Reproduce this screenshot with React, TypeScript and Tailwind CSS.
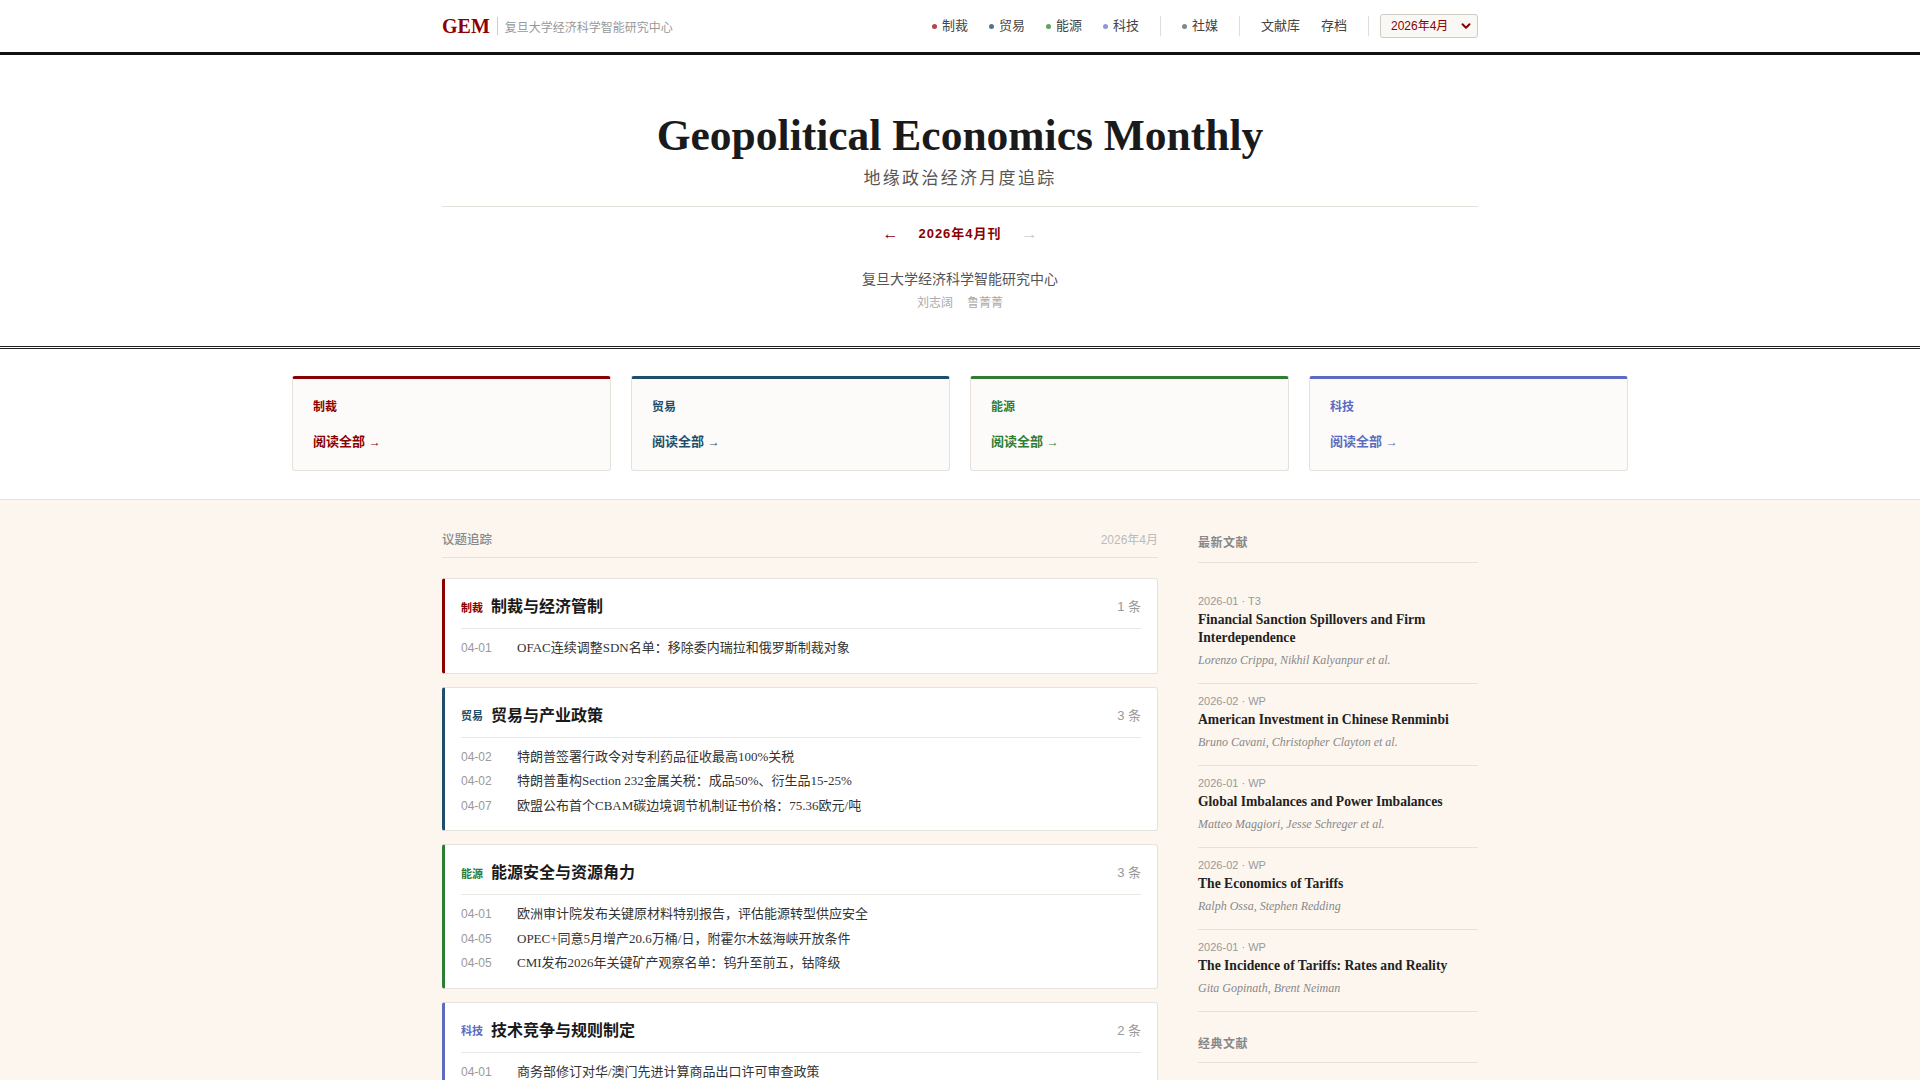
const sans = "font-['Liberation_Sans','Noto_Sans_CJK_SC',sans-serif]";
const serif = "font-['Liberation_Serif','Noto_Sans_CJK_SC',serif]";

const navTopics = [
  { label: '制裁', dot: 'bg-[#b0474a]' },
  { label: '贸易', dot: 'bg-[#557489]' },
  { label: '能源', dot: 'bg-[#5fa35f]' },
  { label: '科技', dot: 'bg-[#9097d8]' },
];

const pillars = [
  { label: '制裁', top: 'border-t-[#8b0000]', text: 'text-[#8b0000]' },
  { label: '贸易', top: 'border-t-[#1f4e6b]', text: 'text-[#1f4e6b]' },
  { label: '能源', top: 'border-t-[#2e7d32]', text: 'text-[#2e7d32]' },
  { label: '科技', top: 'border-t-[#5c6bc0]', text: 'text-[#5c6bc0]' },
];

const topics = [
  {
    tag: '制裁',
    title: '制裁与经济管制',
    border: 'border-l-[#8b0000]',
    tagColor: 'text-[#8b0000]',
    items: [['04-01', 'OFAC连续调整SDN名单：移除委内瑞拉和俄罗斯制裁对象']],
  },
  {
    tag: '贸易',
    title: '贸易与产业政策',
    border: 'border-l-[#1f4e6b]',
    tagColor: 'text-[#1f4e6b]',
    items: [
      ['04-02', '特朗普签署行政令对专利药品征收最高100%关税'],
      ['04-02', '特朗普重构Section 232金属关税：成品50%、衍生品15-25%'],
      ['04-07', '欧盟公布首个CBAM碳边境调节机制证书价格：75.36欧元/吨'],
    ],
  },
  {
    tag: '能源',
    title: '能源安全与资源角力',
    border: 'border-l-[#2e7d32]',
    tagColor: 'text-[#2e7d32]',
    items: [
      ['04-01', '欧洲审计院发布关键原材料特别报告，评估能源转型供应安全'],
      ['04-05', 'OPEC+同意5月增产20.6万桶/日，附霍尔木兹海峡开放条件'],
      ['04-05', 'CMI发布2026年关键矿产观察名单：钨升至前五，钴降级'],
    ],
  },
  {
    tag: '科技',
    title: '技术竞争与规则制定',
    border: 'border-l-[#5c6bc0]',
    tagColor: 'text-[#5c6bc0]',
    items: [
      ['04-01', '商务部修订对华/澳门先进计算商品出口许可审查政策'],
      ['04-06', '荷兰扩大先进半导体设备出口管制范围'],
    ],
  },
];

const papers = [
  { meta: '2026-01 · T3', title: 'Financial Sanction Spillovers and Firm Interdependence', authors: 'Lorenzo Crippa, Nikhil Kalyanpur et al.' },
  { meta: '2026-02 · WP', title: 'American Investment in Chinese Renminbi', authors: 'Bruno Cavani, Christopher Clayton et al.' },
  { meta: '2026-01 · WP', title: 'Global Imbalances and Power Imbalances', authors: 'Matteo Maggiori, Jesse Schreger et al.' },
  { meta: '2026-02 · WP', title: 'The Economics of Tariffs', authors: 'Ralph Ossa, Stephen Redding' },
  { meta: '2026-01 · WP', title: 'The Incidence of Tariffs: Rates and Reality', authors: 'Gita Gopinath, Brent Neiman' },
];

const classics = [
  { meta: '2019 · IS', title: 'Weaponized Interdependence', authors: 'Henry Farrell, Abraham L. Newman' },
  { meta: '1945 · Book', title: 'National Power and the Structure of Foreign Trade', authors: 'Albert O. Hirschman' },
];

function PaperList({ list }: { list: typeof papers }) {
  return (
    <div className="mt-[21px]">
      {list.map((p, i) => (
        <div key={i} className="border-b border-[#e6e1da] pt-[9px] pb-[14px]">
          <div className={`${sans} text-[11px] leading-[16px] text-[#999]`}>{p.meta}</div>
          <div className={`${serif} mt-[2px] text-[13.6px] font-bold leading-[18px] text-[#222]`}>{p.title}</div>
          <div className={`${serif} mt-[4px] text-[12px] italic leading-[18px] text-[#888]`}>{p.authors}</div>
        </div>
      ))}
    </div>
  );
}

export default function App() {
  return (
    <div className={`${sans} min-h-screen bg-[#fdf6ef] text-[#333]`}>
      {/* Top bar */}
      <header className="border-b-[3px] border-[#111] bg-white">
        <div className="mx-auto flex h-[52px] max-w-[1100px] items-center justify-between px-8">
          <div className="flex items-center">
            <span className={`${serif} text-[20px] font-bold leading-none text-[#8b0000]`}>GEM</span>
            <span className="mx-[7px] h-[18px] w-px bg-[#ccc]" />
            <span className="mt-[3px] text-[12px] text-[#999]">复旦大学经济科学智能研究中心</span>
          </div>
          <nav className="flex items-center gap-[21px] text-[13px] text-[#444]">
            {navTopics.map((t) => (
              <span key={t.label} className="flex items-center gap-[5px]">
                <span className={`h-[5px] w-[5px] rounded-full ${t.dot}`} />
                {t.label}
              </span>
            ))}
            <span className="h-[20px] w-px bg-[#ddd]" />
            <span className="flex items-center gap-[5px]">
              <span className="h-[5px] w-[5px] rounded-full bg-[#7c8a8f]" />
              社媒
            </span>
            <span className="h-[20px] w-px bg-[#ddd]" />
            <span>文献库</span>
            <span>存档</span>
            <span className="h-[20px] w-px bg-[#ddd]" />
            <div className="-ml-[10px] flex h-[24px] w-[98px] items-center justify-between rounded-[3px] border border-[#cfcac3] bg-[#faf8f5] pl-[10px] pr-[6px] text-[12px] text-[#8b0000]">
              <span>2026年4月</span>
              <svg width="10" height="10" viewBox="0 0 10 10" fill="none">
                <path d="M1.5 3.2 5 6.8l3.5-3.6" stroke="#8b0000" strokeWidth="2" strokeLinecap="round" strokeLinejoin="round" />
              </svg>
            </div>
          </nav>
        </div>
      </header>

      {/* Masthead */}
      <section className="border-b-[3px] border-double border-[#222] bg-white pb-[34px]">
        <div className="mx-auto max-w-[1100px] px-8 text-center">
          <h1 className={`${serif} pt-[54px] text-[43.5px] font-bold leading-[52px] text-[#1a1a1a]`}>
            Geopolitical Economics Monthly
          </h1>
          <p className="mt-[6px] pb-[15px] text-[17px] leading-[24px] tracking-[2.3px] text-[#555]">地缘政治经济月度追踪</p>
          <div className="border-t border-[#e4e0da]" />
          <div className="mt-[17px] flex items-center justify-center gap-[20px] text-[13px] leading-[20px]">
            <span className="text-[16px] text-[#8b0000]">←</span>
            <span className="font-bold tracking-[1px] text-[#8b0000]">2026年4月刊</span>
            <span className="text-[16px] text-[#ccc]">→</span>
          </div>
          <p className="mt-[25px] text-[14px] leading-[20px] text-[#555]">复旦大学经济科学智能研究中心</p>
          <p className="mt-[5px] flex justify-center gap-[14px] text-[12px] leading-[18px] text-[#aaa]">
            <span>刘志阔</span>
            <span>鲁菁菁</span>
          </p>
        </div>
      </section>

      {/* Pillar cards */}
      <section className="border-b border-[#e8e2da] bg-white pt-[27px] pb-[28px]">
        <div className="mx-auto grid max-w-[1400px] grid-cols-4 gap-5 px-8">
          {pillars.map((p) => (
            <div
              key={p.label}
              className={`rounded-[3px] border border-t-[3px] border-[#e5e2dc] ${p.top} bg-[#fcfbf9] px-5 pt-[19px] pb-[18px]`}
            >
              <div className={`text-[12px] font-bold leading-[18px] ${p.text}`}>{p.label}</div>
              <div className={`mt-[16px] text-[13px] font-bold leading-[20px] ${p.text}`}>
                阅读全部 <span className="text-[12px] font-normal">→</span>
              </div>
            </div>
          ))}
        </div>
      </section>

      {/* Main */}
      <main className="mx-auto flex max-w-[1100px] gap-10 px-8 pt-[31px] pb-16">
        <div className="min-w-0 flex-1">
          <div className="flex items-center justify-between border-b border-[#e6e1da] pb-[8px] leading-[18px]">
            <span className="text-[12.5px] font-medium text-[#888]">议题追踪</span>
            <span className="text-[12px] text-[#bbb]">2026年4月</span>
          </div>
          <div className="mt-[20px] flex flex-col gap-[13px]">
            {topics.map((t) => (
              <div key={t.tag} className={`rounded-[3px] border border-l-[3px] border-[#e6e2dc] ${t.border} bg-white`}>
                <div className="mx-4 flex items-center justify-between border-b border-[#ebe8e3] pt-[16px] pb-[9px]">
                  <div className="flex h-[24px] items-center gap-[8px]">
                    <span className={`mt-[2px] text-[11px] font-bold ${t.tagColor}`}>{t.tag}</span>
                    <span className={`${serif} text-[16px] font-bold text-[#1a1a1a]`}>{t.title}</span>
                  </div>
                  <span className="text-[13px] text-[#999]">{t.items.length} 条</span>
                </div>
                <ul className="px-4 pt-[7px] pb-[12px]">
                  {t.items.map(([d, text], i) => (
                    <li key={i} className="flex h-[24.5px] items-center">
                      <span className="w-[56px] shrink-0 text-[12px] leading-[16px] text-[#999]">{d}</span>
                      <span className={`${serif} text-[13px] leading-[18px] text-[#333]`}>{text}</span>
                    </li>
                  ))}
                </ul>
              </div>
            ))}
          </div>
        </div>

        <aside className="w-[280px] shrink-0">
          <div className="mt-[3px] border-b border-[#e6e1da] pb-[10px] text-[12px] font-bold leading-[18px] tracking-[0.5px] text-[#888]">
            最新文献
          </div>
          <PaperList list={papers} />
          <div className="mt-[23px] border-b border-[#e6e1da] pb-[9px] text-[12px] font-bold leading-[18px] tracking-[0.5px] text-[#888]">
            经典文献
          </div>
          <PaperList list={classics} />
        </aside>
      </main>
    </div>
  );
}
